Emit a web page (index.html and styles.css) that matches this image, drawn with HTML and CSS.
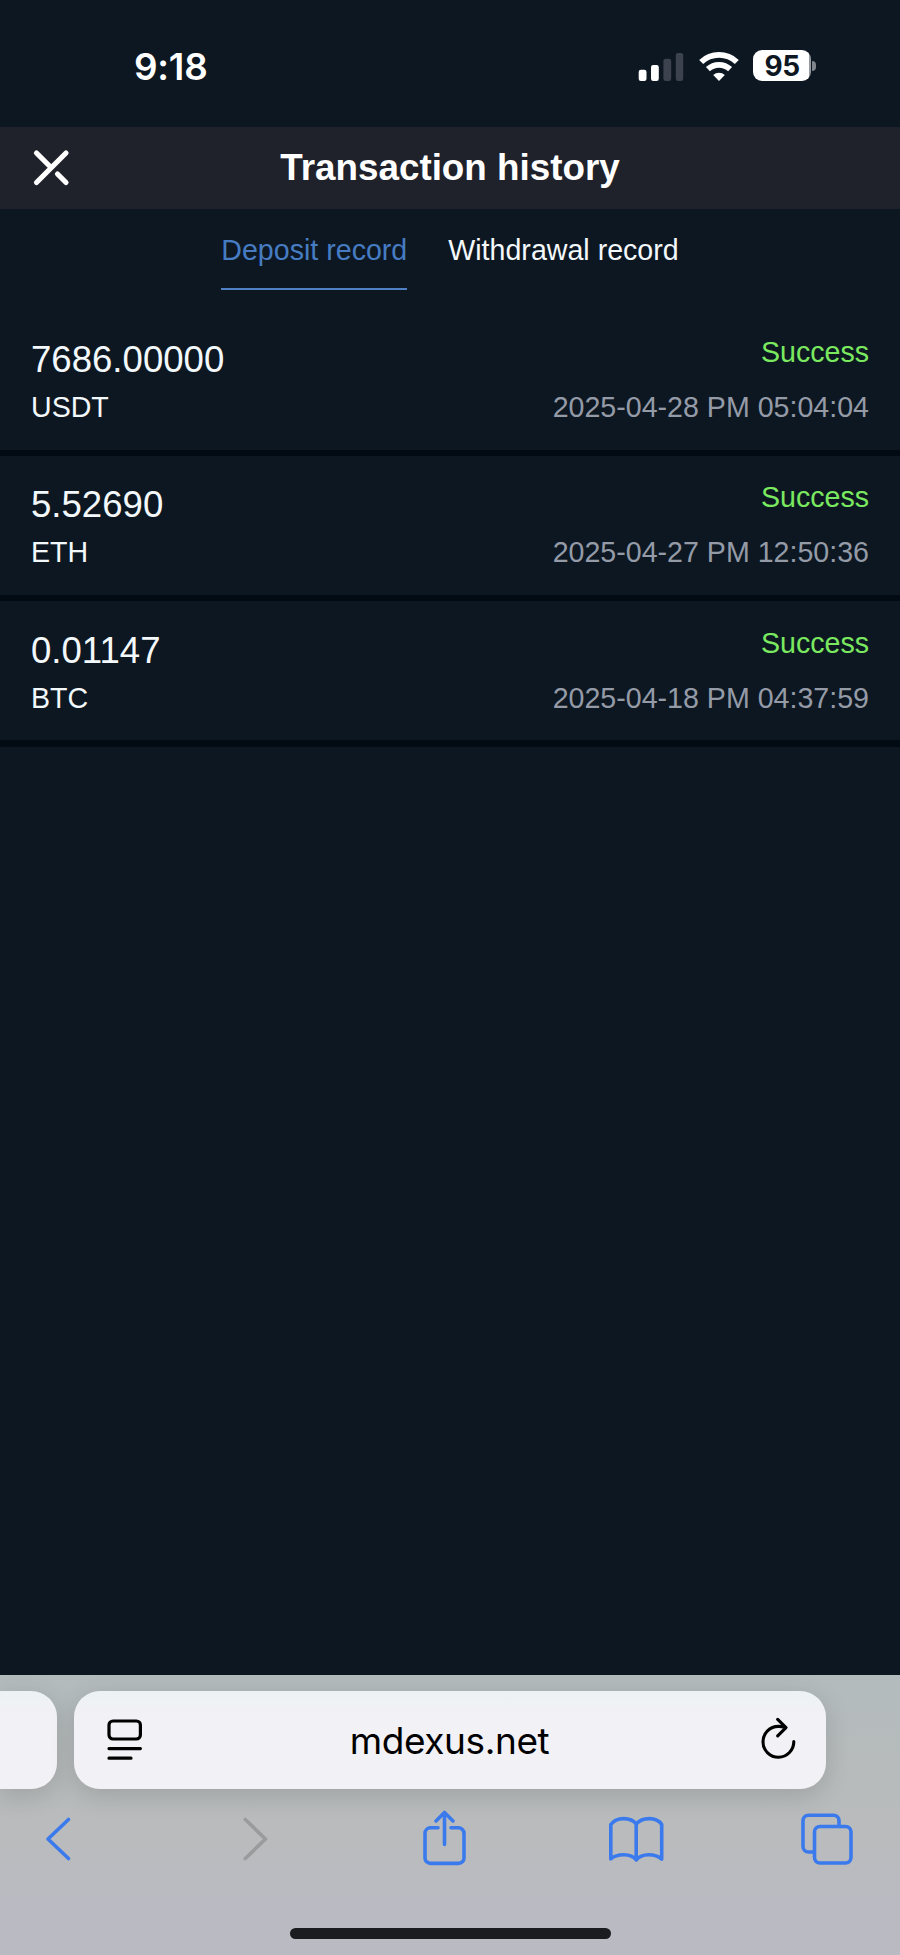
FILE: index.html
```
<!DOCTYPE html>
<html lang="en">
<head>
  <meta charset="UTF-8">
  <meta name="viewport" content="width=device-width, initial-scale=1">
  <title>Transaction history</title>
  <link rel="stylesheet" href="styles.css">
</head>
<body>
  <div class="status-bar">
    <span class="time">9:18</span>
    <div class="status-icons">
      <svg class="signal" width="46" height="30" viewBox="0 0 46 30" fill="#fff">
        <rect x="0.7" y="18.8" width="7.8" height="11.2" rx="2.2"/>
        <rect x="13" y="14" width="7.8" height="16" rx="2.2"/>
        <rect x="25.4" y="7.8" width="7.8" height="22.2" rx="2.2" fill="#3c424e"/>
        <rect x="37.8" y="2" width="7.4" height="28" rx="2.2" fill="#3c424e"/>
      </svg>
      <svg class="wifi" width="40" height="30" viewBox="0 0 40 30">
        <g fill="none" stroke="#fff" stroke-width="5.8">
          <path d="M2.2 11a26 26 0 0 1 35.6 0"/>
          <path d="M8.9 18.2a16.2 16.2 0 0 1 22.2 0"/>
        </g>
        <path d="M20 30l-5.8-6a8.4 8.4 0 0 1 11.6 0z" fill="#fff"/>
      </svg>
      <div class="battery">95</div>
      <span class="battery-cap"></span>
    </div>
  </div>

  <header class="header">
    <svg class="close" width="36" height="36" viewBox="0 0 36 36" fill="none" stroke="#fff" stroke-width="5.2" stroke-linecap="round">
      <path d="M3.5 32.5L33 3M3.5 3l14 14M24.5 24l8.5 8.5"/>
    </svg>
    <h1>Transaction history</h1>
  </header>

  <nav class="tabs">
    <a class="tab active">Deposit record</a>
    <a class="tab">Withdrawal record</a>
  </nav>

  <ul class="records">
    <li>
      <div class="left">
        <p class="amount">7686.00000</p>
        <p class="coin">USDT</p>
      </div>
      <div class="right">
        <p class="state">Success</p>
        <p class="date">2025-04-28 PM 05:04:04</p>
      </div>
    </li>
    <li>
      <div class="left">
        <p class="amount">5.52690</p>
        <p class="coin">ETH</p>
      </div>
      <div class="right">
        <p class="state">Success</p>
        <p class="date">2025-04-27 PM 12:50:36</p>
      </div>
    </li>
    <li>
      <div class="left">
        <p class="amount">0.01147</p>
        <p class="coin">BTC</p>
      </div>
      <div class="right">
        <p class="state">Success</p>
        <p class="date">2025-04-18 PM 04:37:59</p>
      </div>
    </li>
  </ul>

  <footer class="browser">
    <div class="address-row">
      <div class="prev-page"></div>
      <div class="address">
        <svg width="36" height="42" viewBox="0 0 36 42" fill="none" stroke="#000" stroke-width="3.2" stroke-linecap="round">
          <rect x="2" y="2" width="31.4" height="18" rx="4"/>
          <path d="M2 29.6h31.4M2 39.2h22"/>
        </svg>
        <span class="url">mdexus.net</span>
        <svg width="36" height="42" viewBox="0 0 36 42" fill="none" stroke="#000" stroke-width="3.1" stroke-linecap="round" stroke-linejoin="round">
          <path d="M32.8 22.5a15.4 15.4 0 1 1-15.4-15.1c2.6 0 5 .5 7 1.2M16.700 .4l8.300 8.200-8.300 8.300"/>
        </svg>
      </div>
    </div>
    <div class="toolbar">
      <svg width="60" height="60" viewBox="0 0 60 60">
        <path d="M40.5 11.5L20 31l20.5 19.5"/>
      </svg>
      <svg class="disabled" width="60" height="60" viewBox="0 0 60 60">
        <path d="M25.3 11.5L45.5 31 25.3 50.5"/>
      </svg>
      <svg width="60" height="60" viewBox="0 0 60 60">
        <path d="M25 19.8h-7.5a5.5 5.5 0 0 0-5.5 5.5v24.6a5.5 5.5 0 0 0 5.5 5.5h28a5.5 5.5 0 0 0 5.5-5.5V25.3a5.5 5.5 0 0 0-5.5-5.5H38M31.5 36.5V4.5M23 13l8.5-8.5 8.5 8.5"/>
      </svg>
      <svg width="60" height="60" viewBox="0 0 60 60">
        <path d="M31.2 16C26 9 11.5 8.5 5.8 16.5V51C12 45.5 26 45 31.2 52C37 45 50 45.5 56.7 51V16.5C51.5 8.5 37 9 31.2 16V51"/>
      </svg>
      <svg width="60" height="60" viewBox="0 0 60 60">
        <rect x="17.5" y="18.5" width="36.5" height="36.5" rx="5.5"/>
        <path d="M17 44h-5.5a5.5 5.5 0 0 1-5.5-5.5V12.7a5.5 5.5 0 0 1 5.5-5.5h25a5.5 5.5 0 0 1 5.5 5.5V18"/>
      </svg>
    </div>
    <div class="home-indicator"></div>
  </footer>
</body>
</html>
```
FILE: styles.css
```
*{
  box-sizing: border-box;
}
body{
  margin: 0;
  height: 1955px;
  display: flex;
  flex-direction: column;
  background: #0d1722;
  color: #f3f8fb;
  font-family: "Liberation Sans", Arial, sans-serif;
  font-size: 28.6px;
  overflow: hidden;
}
h1,p,ul{
  margin: 0;
  padding: 0;
}
svg{
  overflow: visible;
}

/* status bar */
.status-bar{
  height: 127px;
  padding: 45px 83px 0 134px;
  display: flex;
  justify-content: space-between;
  align-items: flex-start;
  font-family: Inter, sans-serif;
  font-weight: 600;
}
.time{
  font-size: 36.8px;
  line-height: 44px;
  letter-spacing: -0.2px;
  color: #fff;
}
.status-icons{
  display: flex;
  align-items: center;
  padding-top: 5px;
}
.wifi{
  margin: 0 14.5px;
}
.battery{
  width: 58px;
  height: 31px;
  border-radius: 9px;
  background: linear-gradient(90deg, #fff 56px, #969ba1 56px);
  color: #0d1722;
  font-size: 28px;
  font-weight: 700;
  line-height: 32px;
  letter-spacing: -0.5px;
  text-align: center;
}
.battery-cap{
  width: 4px;
  height: 10px;
  margin-left: 1px;
  margin-right: 1px;
  border-radius: 0 5px 5px 0;
  background: #80858b;
}

/* page header */
.header{
  height: 82px;
  padding: 0 33px;
  display: grid;
  grid-template-columns: 36px 1fr 36px;
  align-items: center;
  background: #20222b;
}
.header h1{
  font-size: 36.8px;
  line-height: 80px;
  text-align: center;
  color: #fff;
}

/* tabs */
.tabs{
  height: 101.7px;
  display: flex;
  justify-content: center;
  align-items: flex-start;
  gap: 41px;
}
.tab{
  height: 81px;
  line-height: 82px;
  border-bottom: 2px solid transparent;
}
.tab.active{
  color: #467cc2;
  border-color: #4f80c4;
}

/* deposit list */
.records{
  list-style: none;
  display: flex;
  flex-direction: column;
  gap: 6.3px;
  padding-bottom: 6.3px;
  background: #020a14;
}
.records li{
  height: 139px;
  padding: 24.3px 31px 0;
  display: flex;
  justify-content: space-between;
  background: #0d1722;
}
.amount{
  font-size: 36.6px;
  line-height: 50px;
}
.coin{
  line-height: 44px;
}
.right{
  text-align: right;
}
.right p{
  line-height: 34px;
}
.right .state{
  color: #7be960;
  margin-bottom: 21px;
}
.date{
  color: #949ba7;
}

/* browser bar */
.browser{
  height: 280px;
  margin-top: auto;
  padding-top: 16px;
  background: linear-gradient(#b3bbbc 0, #b9bbbc 150px, #babbc2 230px);
}
.address-row{
  display: flex;
  gap: 17px;
}
.prev-page,.address{
  height: 98px;
  background: linear-gradient(#ecf2f3, #f2f1f5 22px);
  box-shadow: 0 6px 26px rgba(0,0,0,0.14);
}
.prev-page{
  width: 57px;
  border-radius: 0 26px 26px 0;
}
.address{
  width: 752px;
  padding: 0 29px 0 33px;
  border-radius: 26px;
  display: flex;
  justify-content: space-between;
  align-items: center;
}
.url{
  font-family: Inter, sans-serif;
  font-size: 37px;
  letter-spacing: -0.4px;
  color: #000;
  margin-right: 5px;
}
.toolbar{
  height: 60px;
  margin-top: 19px;
  padding: 0 43px 0 28px;
  display: flex;
  justify-content: space-between;
}
.toolbar svg{
  fill: none;
  stroke: #3b7aed;
  stroke-width: 3.6;
  stroke-linecap: round;
  stroke-linejoin: round;
}
.toolbar .disabled{
  stroke: #999b9d;
}
.home-indicator{
  width: 321px;
  height: 11px;
  margin: 60px auto 0;
  border-radius: 6px;
  background: #1b1c20;
}
```
